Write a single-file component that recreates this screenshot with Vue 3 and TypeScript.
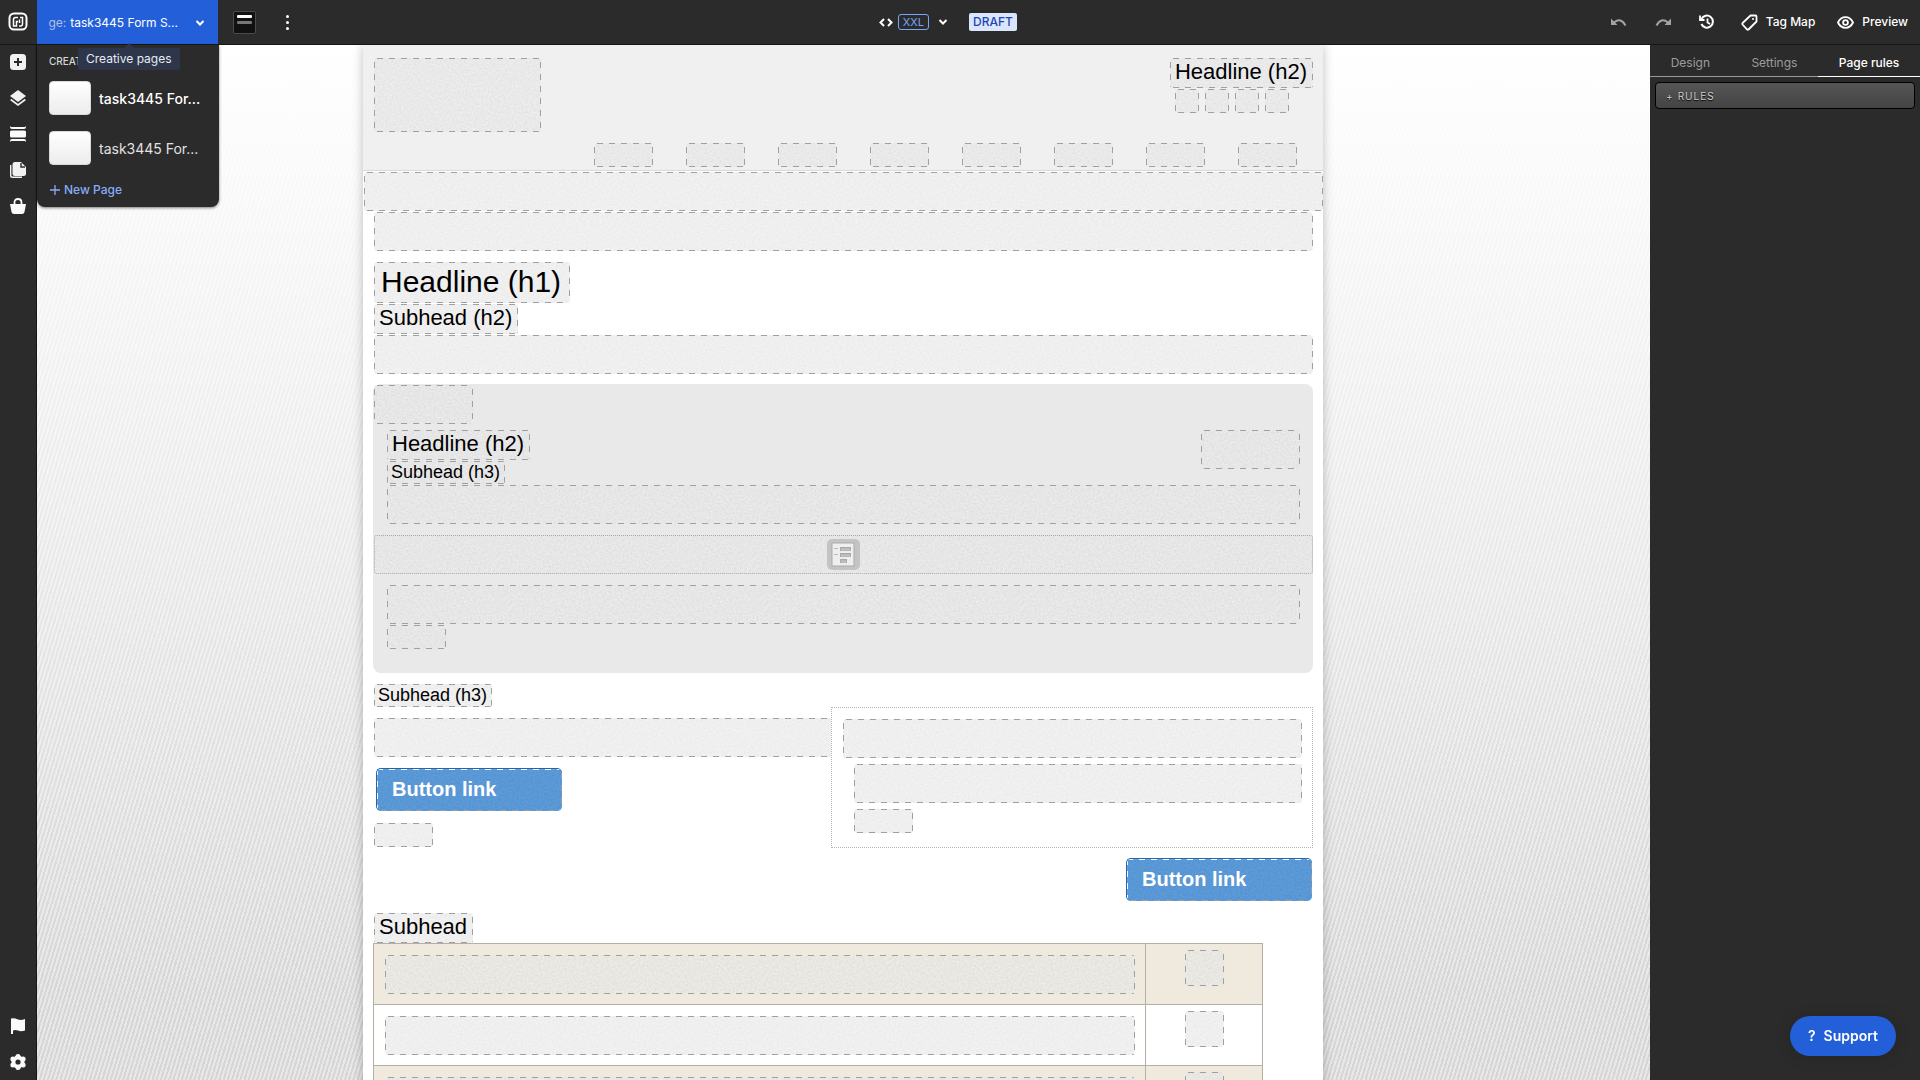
<script setup lang="ts">
interface PageEntry {
  id: number
  name: string
  current: boolean
}

const pages: PageEntry[] = [
  { id: 1, name: 'task3445 For...', current: true },
  { id: 2, name: 'task3445 For...', current: false },
]

const tabs: string[] = ['Design', 'Settings', 'Page rules']
const activeTab = 'Page rules'
const tableRows = 3
</script>

<template>
  <div class="editor">
    <header class="topbar">
      <button class="logo" aria-label="Home">
        <svg width="20" height="20" viewBox="0 0 20 20" fill="none" stroke="#fff">
          <rect x="1.5" y="1.5" width="17" height="16" rx="4.5" stroke-width="2" />
          <path d="M10 5.500H7.500Q5.500 5.500 5.500 7.500V14H8.500V9.500H10M12 5.500H14.500V12Q14.500 14 12.500 14H11M11.500 7.500V11" stroke-width="1.500" />
        </svg>
      </button>
      <div class="picker">
        <button class="picker-button">
          <span class="picker-text"><span class="picker-label">Page:</span><span>task3445 Form S...</span></span>
          <svg width="10" height="8" viewBox="0 0 10 8" fill="none" stroke="#fff" stroke-width="2"><path d="M1.500 2L5 5.500L8.500 2" /></svg>
        </button>
        <div class="page-menu">
          <h2 class="menu-title">CREATIVE PAGES</h2>
          <button v-for="page in pages" :key="page.id" class="page-entry" :class="{ current: page.current }">
            <span class="thumb"></span>
            <span class="page-name">{{ page.name }}</span>
          </button>
          <button class="new-page">
            <svg width="10" height="10" viewBox="0 0 10 10" stroke="#86adfa" stroke-width="1.300"><path d="M5 0V10M0 5H10" /></svg>
            New Page
          </button>
        </div>
        <div class="tooltip" role="tooltip">Creative pages</div>
      </div>
      <button class="view-toggle" aria-label="Header view"><i></i><i></i></button>
      <button class="kebab" aria-label="More"><i></i><i></i><i></i></button>
      <div class="center-tools">
        <svg width="14" height="9" viewBox="0 0 14 9" fill="none" stroke="#fff" stroke-width="2"><path d="M5 1L1.500 4.500L5 8M9 1L12.500 4.500L9 8" /></svg>
        <button class="size">XXL</button>
        <svg class="caret" width="10" height="8" viewBox="0 0 10 8" fill="none" stroke="#fff" stroke-width="2"><path d="M1.500 2L5 5.500L8.500 2" /></svg>
        <span class="draft">DRAFT</span>
      </div>
      <div class="actions">
        <button class="undo" aria-label="Undo">
          <svg width="16" height="9" viewBox="0 0 16 9"><path d="M3 4.500Q10 -1 14.500 7.500" fill="none" stroke="#a3a3a3" stroke-width="2" /><path d="M0 0.500V7H6.500Z" fill="#a3a3a3" /></svg>
        </button>
        <button class="redo" aria-label="Redo">
          <svg width="16" height="9" viewBox="0 0 16 9"><path d="M13 4.500Q6 -1 1.500 7.500" fill="none" stroke="#a3a3a3" stroke-width="2" /><path d="M16 .500V7H9.500Z" fill="#a3a3a3" /></svg>
        </button>
        <button class="history" aria-label="History">
          <svg width="16" height="16" viewBox="0 0 16 16" fill="none" stroke="#fff" stroke-width="2"><path d="M2.500 5A6 6 0 1 1 2.400 10" /><path d="M1 1.500V6H5.500M8.500 4.500V8.500L11 10" stroke-width="1.800" /></svg>
        </button>
        <button class="tag">
          <svg width="17" height="17" viewBox="0 0 17 17" fill="none" stroke="#fff" stroke-width="1.800" stroke-linejoin="round"><path d="M9.500 1.500H14.500Q15.500 1.500 15.500 2.500V7.500L7.500 15.500Q6.700 16 6 15.300L1.500 10.500Q1 9.700 1.600 9Z" /><circle cx="12" cy="5" r="1" fill="#fff" stroke="none" /></svg>
          Tag Map
        </button>
        <button class="preview">
          <svg width="17" height="13" viewBox="0 0 17 13" fill="none" stroke="#fff" stroke-width="1.800"><path d="M1 6.500Q3.500 1.200 8.500 1.200T16 6.500Q13.500 11.800 8.500 11.800T1 6.500Z" /><circle cx="8.500" cy="6.500" r="2.400" /></svg>
          Preview
        </button>
      </div>
    </header>

    <nav class="rail" aria-label="Tools">
      <button aria-label="Add"><svg width="16" height="16" viewBox="0 0 16 16"><rect width="16" height="16" rx="3.500" fill="#f1f1f1" /><path d="M8 4V12M4 8H12" stroke="#2b2b2b" stroke-width="2" /></svg></button>
      <button aria-label="Layers"><svg width="16" height="16" viewBox="0 0 16 16"><path d="M8 0L16 6L8 12L0 6Z" fill="#f1f1f1" /><path d="M.700 9.500L8 15L15.300 9.500" fill="none" stroke="#f1f1f1" stroke-width="1.600" /></svg></button>
      <button aria-label="Sections"><svg width="16" height="16" viewBox="0 0 16 16" fill="#f8fafc"><rect y="4.500" width="16" height="7" rx="1.500" /><path d="M0 0V1Q0 3 2 3H14Q16 3 16 1V0L15 1H1ZM0 16V15Q0 13 2 13H14Q16 13 16 15V16L15 15H1Z" /></svg></button>
      <button aria-label="Pages"><svg width="16" height="16" viewBox="0 0 16 16" fill="#f1f1f1"><path d="M5 0H11L16 5V11.500Q16 14 13.500 14H5Q2.500 14 2.500 11.500V2.500Q2.500 0 5 0Z" /><path d="M11 1V5H15" fill="none" stroke="#2b2b2b" stroke-width="1.400" /><path d="M.700 3V13.500Q.700 15.300 2.500 15.300H12" fill="none" stroke="#f1f1f1" stroke-width="1.400" /></svg></button>
      <button aria-label="Store"><svg width="16" height="16" viewBox="0 0 16 16"><path d="M0 6H16L14.500 14Q14 16 12 16H4Q2 16 1.500 14Z" fill="#f8fafc" /><path d="M4.500 7V4.500Q4.500 1 8 1T11.500 4.500V7" fill="none" stroke="#f8fafc" stroke-width="1.800" /></svg></button>
      <span class="rail-space"></span>
      <button aria-label="Flag"><svg width="16" height="16" viewBox="0 0 16 16"><path d="M1 .500Q4 -.500 8 1.500Q11 2.500 15 1V12.500Q11 14 8 12.500Q5 11.500 3 12.500V16H1Z" fill="#f8fafc" /></svg></button>
      <button aria-label="Settings"><svg width="16" height="16" viewBox="0 0 16 16"><g fill="#f8fafc"><circle cx="8" cy="8" r="6.500" /><circle cx="8" cy="2.500" r="2.500" /><circle cx="8" cy="13.500" r="2.500" /><circle cx="2.900" cy="5" r="2.500" /><circle cx="13.100" cy="5" r="2.500" /><circle cx="2.900" cy="11" r="2.500" /><circle cx="13.100" cy="11" r="2.500" /></g><circle cx="8" cy="8" r="2.600" fill="#2b2b2b" /></svg></button>
    </nav>

    <main class="canvas">
      <article class="sheet">
        <header class="sheet-head">
          <div class="head-row">
            <div class="slot logo-slot"></div>
            <div class="head-side">
              <h2 class="slot h2">Headline (h2)</h2>
              <div class="socials"><div v-for="n in 4" :key="n" class="slot square"></div></div>
            </div>
          </div>
          <div class="sheet-nav"><div v-for="n in 8" :key="n" class="slot small"></div></div>
        </header>
        <div class="slot bar"></div>
        <div class="sheet-body">
          <div class="slot bar"></div>
          <h1 class="slot h1 gap">Headline (h1)</h1>
          <h2 class="slot h2">Subhead (h2)</h2>
          <div class="slot bar"></div>

          <section class="form-panel">
            <div class="slot bar medium"></div>
            <div class="panel-inner panel-top">
              <div>
                <h2 class="slot h2">Headline (h2)</h2>
                <h3 class="slot h3">Subhead (h3)</h3>
              </div>
              <div class="slot bar medium"></div>
            </div>
            <div class="panel-inner"><div class="slot bar"></div></div>
            <div class="slot bar dotted gap">
              <svg width="33" height="31" viewBox="0 0 33 31">
                <rect width="33" height="31" rx="5" fill="#c4c4c4" />
                <rect x="5" y="4" width="22" height="23" fill="#eee" stroke="#aaa" stroke-width="1" />
                <path d="M7 9.500H11M7 15.500H11" stroke="#bbb" stroke-width="1" />
                <path d="M13 10H24M13 16H24M13 22H20" stroke="#aaa" stroke-width="4" />
                <path d="M14 10.500H23M14 16.500H23M14 22.500H19" stroke="#c4c4c4" stroke-width="2" />
              </svg>
            </div>
            <div class="panel-inner gap">
              <div class="slot bar"></div>
              <div class="slot small"></div>
            </div>
          </section>

          <h3 class="slot h3 gap">Subhead (h3)</h3>
          <div class="columns">
            <div class="column-left">
              <div class="slot bar open"></div>
              <a class="link-button" href="#">Button link</a>
              <div class="slot small"></div>
            </div>
            <aside class="column-right">
              <div class="slot bar"></div>
              <div class="slot bar indent"></div>
              <div class="slot small indent"></div>
            </aside>
          </div>
          <a class="link-button end" href="#">Button link</a>
          <h2 class="slot h2 gap">Subhead</h2>
          <table>
            <tbody>
              <tr v-for="n in tableRows" :key="n">
                <td><div class="slot bar"></div></td>
                <td class="narrow"><div class="slot cell-box"></div></td>
              </tr>
            </tbody>
          </table>
        </div>
      </article>
    </main>

    <aside class="inspector">
      <div class="tabs" role="tablist">
        <button v-for="tab in tabs" :key="tab" role="tab" :aria-selected="tab === activeTab" :class="{ active: tab === activeTab }">{{ tab }}</button>
      </div>
      <button class="rules"><span>+</span>RULES</button>
    </aside>

    <button class="support"><span>?</span>Support</button>
  </div>
</template>

<style>
body {
  margin: 0;
}
</style>

<style scoped>
.editor {
  display: grid;
  grid-template: 45px minmax(0, 1fr) / 37px minmax(0, 1fr) 270px;
  height: 100vh;
  overflow: hidden;
  font: 12px/16px Inter, sans-serif;
  color: #fff;
  background: #2b2b2b;
}
* {
  box-sizing: border-box;
}
svg {
  display: block;
  flex: none;
}
button {
  display: flex;
  align-items: center;
  padding: 0;
  border: 0;
  background: none;
  color: inherit;
  font: inherit;
  white-space: nowrap;
}
h1,
h2,
h3 {
  margin: 0;
  font-weight: 400;
}

/* Top bar */
.topbar {
  grid-column: 1 / -1;
  position: relative;
  z-index: 3;
  display: flex;
  align-items: center;
  border-bottom: 1px solid #161616;
}
.logo {
  width: 37px;
  padding-left: 8px;
}
.picker {
  position: relative;
  align-self: stretch;
  width: 181px;
}
.picker-button {
  width: 100%;
  height: 44px;
  padding: 2px 13px 0 12px;
  justify-content: space-between;
  background: #235fd9;
}
.picker-text {
  display: flex;
  justify-content: flex-end;
  gap: 4px;
  width: 129px;
  overflow: hidden;
}
.picker-label {
  color: #b4bfe0;
}
.page-menu {
  position: absolute;
  top: 45px;
  left: 0;
  width: 182px;
  height: 162px;
  padding: 8px 12px 0;
  border-radius: 0 0 8px 8px;
  background: #2b2b2b;
  box-shadow: 0 1px 3px rgba(0, 0, 0, 0.5);
}
.menu-title {
  height: 20px;
  font-size: 10px;
  font-weight: 500;
  color: #d6d6d6;
}
.page-entry {
  gap: 8px;
  width: 100%;
  height: 50px;
  font-size: 14px;
  color: #e2e2e2;
}
.page-entry.current {
  font-weight: 500;
  color: #fff;
}
.page-name {
  padding-top: 2px;
}
.thumb {
  width: 42px;
  height: 34px;
  border: 1px solid #d5d9e2;
  border-radius: 4px;
  background: linear-gradient(#fff, #ececec);
}
.new-page {
  gap: 4px;
  height: 34px;
  padding-left: 1px;
  color: #86adfa;
  font-weight: 500;
}
.tooltip {
  position: absolute;
  top: 48px;
  left: 41px;
  padding: 3px 8px;
  border-radius: 2px;
  background: #2d364a;
  color: #e8ebf2;
}
.tooltip::before {
  content: '';
  position: absolute;
  top: -5px;
  left: 46px;
  border: 5px solid transparent;
  border-top: 0;
  border-bottom-color: #2d364a;
}
.view-toggle {
  flex-direction: column;
  gap: 3px;
  width: 23px;
  height: 23px;
  margin-left: 15px;
  padding-top: 3px;
  border: 1px solid #4b4b4b;
  border-radius: 2px;
  background: #111;
}
.view-toggle i {
  width: 15px;
  height: 3px;
  border-radius: 1px;
  background: #fff;
}
.view-toggle i + i {
  background: #777;
}
.kebab {
  flex-direction: column;
  gap: 3px;
  margin-left: 30px;
}
.kebab i {
  width: 3px;
  height: 3px;
  border-radius: 50%;
  background: #fff;
}
.center-tools {
  display: flex;
  align-items: center;
  margin: 0 auto;
  padding-right: 4px;
}
.size {
  height: 16px;
  margin: 0 9px 0 5px;
  padding: 0 4px;
  border: 1px solid #78a5f8;
  border-radius: 3px;
  color: #78a5f8;
  font-size: 11px;
}
.draft {
  margin-left: 21px;
  padding: 1px 4px;
  border-radius: 2px;
  background: #dbe6fd;
  color: #1d48ae;
  font-weight: 500;
}
.actions {
  display: flex;
  align-items: center;
  padding-right: 12px;
  font-weight: 500;
}
.redo,
.history {
  margin-left: 28px;
}
.tag {
  margin-left: 26px;
}
.tag,
.preview {
  gap: 8px;
}
.preview {
  margin-left: 22px;
}

/* Left rail */
.rail {
  display: flex;
  flex-direction: column;
  align-items: center;
  gap: 20px;
  padding: 9px 0 10px;
  border-right: 1px solid #171717;
}
.rail-space {
  flex: 1;
}

/* Canvas */
.canvas {
  padding-right: 1px;
  overflow: hidden;
  background:
    linear-gradient(#fff, rgba(255, 255, 255, 0) 92%),
    repeating-linear-gradient(107deg, #d6d6d6 0 2px, #e8e8e8 2px 4px);
}
.sheet {
  --grain: url("data:image/svg+xml,%3Csvg xmlns='http://www.w3.org/2000/svg' width='256' height='256'%3E%3Cfilter id='g' x='0' y='0' width='100%25' height='100%25'%3E%3CfeTurbulence type='fractalNoise' baseFrequency='.5' numOctaves='2' stitchTiles='stitch'/%3E%3CfeColorMatrix values='0 0 0 0 1 0 0 0 0 1 0 0 0 0 1 .8 0 0 0 -.2'/%3E%3C/filter%3E%3Crect width='256' height='256' filter='url(%23g)'/%3E%3C/svg%3E");
  --dash-x: repeating-linear-gradient(90deg, transparent 0 3px, #a0a0a0 3px 9px, transparent 9px 12px);
  --dash-y: repeating-linear-gradient(transparent 0 4px, #a0a0a0 4px 10px, transparent 10px 12px);
  max-width: 960px;
  min-height: 100%;
  margin: 0 auto;
  background: #fff;
  box-shadow: 0 0 10px rgba(0, 0, 0, 0.25);
  color: #000;
  font-family: "Liberation Sans", Arial, sans-serif;
}
.slot {
  margin: 1px 0 0 1px;
  border-radius: 3px;
  background:
    var(--dash-x) 0 0 / 100% 1px no-repeat,
    var(--dash-x) 0 100% / 100% 1px no-repeat,
    var(--dash-y) 0 0 / 1px 100% no-repeat,
    var(--dash-y) 100% 0 / 1px 100% no-repeat,
    var(--grain),
    rgba(215, 215, 215, 0.5);
}
.bar {
  height: 39px;
}
.medium {
  width: 99px;
}
.small {
  width: 59px;
  height: 24px;
}
.square {
  width: 24px;
  height: 24px;
}
.gap {
  margin-top: 11px;
}
.h1,
.h2,
.h3 {
  width: fit-content;
}
.h1 {
  height: 41px;
  padding: 0 9px 0 7px;
  font-size: 30px;
  line-height: 40px;
}
.h2 {
  height: 30px;
  padding: 0 6px 0 5px;
  font-size: 22px;
  line-height: 28px;
}
.h3 {
  height: 23px;
  padding: 0 5px 0 4px;
  font-size: 18px;
  line-height: 22px;
}
.sheet-head {
  padding: 12px 10px 3px;
  border-bottom: 1px solid #d9d9d9;
  background: #f0f0f0;
}
.head-row {
  display: flex;
  justify-content: space-between;
  margin-bottom: 10px;
}
.logo-slot {
  width: 167px;
  height: 74px;
}
.socials {
  display: flex;
  gap: 5px;
  padding-left: 5px;
}
.sheet-nav {
  display: flex;
  justify-content: flex-end;
  gap: 32px;
  padding-right: 16px;
}
.sheet-body {
  display: flex;
  flex-direction: column;
  padding: 0 10px;
}
.form-panel {
  margin-top: 10px;
  padding-bottom: 24px;
  border-radius: 8px;
  background: #e9e9e9;
}
.panel-inner {
  padding: 0 13px;
}
.panel-inner.gap {
  margin-top: 11px;
}
.form-panel .dotted {
  margin-top: 11px;
}
.panel-top {
  display: flex;
  justify-content: space-between;
  padding-top: 5px;
}
.dotted {
  display: flex;
  align-items: center;
  justify-content: center;
  border: 1px dotted #a8a8a8;
  background: var(--grain), rgba(215, 215, 215, 0.5);
}
.columns {
  display: flex;
}
.column-left {
  flex: 1;
  padding-top: 10px;
}
.column-left .open {
  margin-right: -4px;
}
.column-left .link-button {
  margin: 11px 0 12px 3px;
}
.column-right {
  position: relative;
  width: 482px;
  padding: 10px 10px 14px;
  border: 1px dotted #b4b4b4;
  background: #fff;
}
.column-right .indent {
  margin: 6px 0 0 12px;
}
.link-button {
  display: block;
  width: 186px;
  height: 43px;
  padding-left: 15px;
  border: 1px solid #0f6cc4;
  border-width: 1px 0 0 1px;
  border-radius: 5px;
  background:
    repeating-linear-gradient(90deg, #fff 0 6px, #8d9aa8 6px 12px) 0 0 / 100% 1px no-repeat,
    var(--dash-x) 0 100% / 100% 1px no-repeat,
    repeating-linear-gradient(#fff 0 6px, #8d9aa8 6px 12px) 0 0 / 1px 100% no-repeat,
    var(--dash-y) 100% 0 / 1px 100% no-repeat,
    linear-gradient(rgba(84, 148, 212, 0.8), rgba(84, 148, 212, 0.8)),
    var(--grain),
    #4a8dd2;
  color: #fff;
  font-size: 20px;
  font-weight: 700;
  line-height: 40px;
  text-decoration: none;
}
.end {
  align-self: flex-end;
  margin: 10px 1px 0 0;
}
.end + .h2 {
  margin-top: 12px;
}
table {
  width: 890px;
  max-width: 100%;
  border: 1px solid #b5b0a3;
  border-width: 1px 0 0 1px;
  border-spacing: 0;
}
td {
  padding: 10px;
  border: 1px solid #b5b0a3;
  border-width: 0 1px 1px 0;
  vertical-align: top;
}
td.narrow {
  width: 117px;
  padding: 5px 10px;
}
.cell-box {
  width: 39px;
  height: 36px;
  margin: 1px auto 0;
}
tr:nth-child(odd) {
  background: #f0eade;
}

/* Inspector */
.tabs {
  display: flex;
}
.tabs button {
  flex: auto;
  justify-content: center;
  height: 32px;
  padding-top: 5px;
  border-bottom: 1px solid #999;
  color: #9b9b9b;
}
.tabs .active {
  border-color: #fff;
  color: #fff;
  font-weight: 500;
}
.rules {
  gap: 4px;
  width: calc(100% - 10px);
  height: 27px;
  margin: 5px;
  padding-left: 10px;
  border: 1px solid #000;
  border-radius: 4px;
  background: linear-gradient(#555, #444);
  color: #d0d0d0;
  font-size: 10px;
  letter-spacing: 1px;
  text-shadow: 0 1px 1px #000;
}
.support {
  position: fixed;
  right: 24px;
  bottom: 24px;
  z-index: 4;
  gap: 8px;
  height: 40px;
  padding: 0 18px;
  border-radius: 20px;
  background: #235fd9;
  box-shadow: 0 2px 16px rgba(0, 0, 0, 0.15);
  font-size: 14px;
  font-weight: 600;
}
</style>
